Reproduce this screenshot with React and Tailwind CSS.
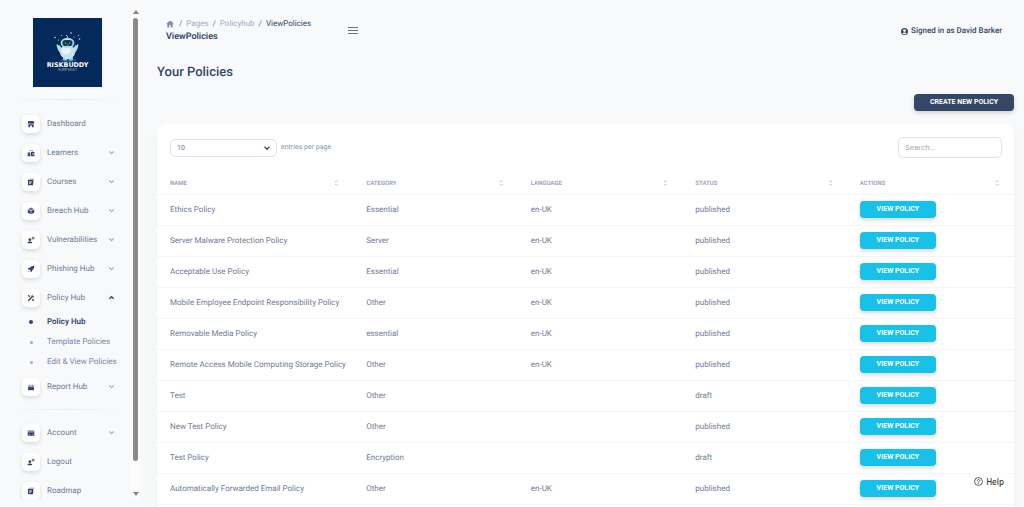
import React from "react";

const icons = {
  shop: (
    <>
      <path d="M2.2 1.5h7.6L11 4.4a1.3 1.3 0 0 1-2.5.3 1.3 1.3 0 0 1-2.5 0 1.3 1.3 0 0 1-2.5 0A1.3 1.3 0 0 1 1 4.4z" />
      <path d="M2 6.2h8v4.6H7.4V8.2H4.6v2.6H2z" />
    </>
  ),
  office: (
    <>
      <path d="M4 5V1.6h5V5H8V2.6H5V5z" opacity=".5" />
      <path fillRule="evenodd" d="M1 5.4h4v5.4H1zM2 7v1h1V7zM6 4.6h5v6.2H6zM7.5 6v1h.8V6zM9 6v1h.8V6zM7.5 8v1h.8V8zM9 8v1h.8V8z" />
    </>
  ),
  book: (
    <>
      <path d="M3.4 1h7.2v7.6H9.8V1.9H3.4z" opacity=".65" />
      <path fillRule="evenodd" d="M1.4 2.6h7.6v8.2H1.4zM3.2 4.4v.9h4v-.9zM3.2 6.2v.9h4v-.9zM3.2 8v.9h2.4V8z" />
    </>
  ),
  box: (
    <>
      <path d="M6 .9 10.4 3 6 5.2 1.6 3z" opacity=".75" />
      <path d="M1.2 3.9 5.6 6v5L1.2 8.800zM10.8 3.9 6.400 6v5l4.400-2.200z" />
    </>
  ),
  support: (
    <>
      <path d="M4.3 3.4a2.1 2.1 0 1 1 0 4.2 2.1 2.1 0 0 1 0-4.2zM.9 11V9.8c0-1 1.5-1.6 3.4-1.6s3.4.6 3.4 1.6V11z" />
      <path d="M7.1 1.3h4.1v3.4H8.8L7.4 6z" opacity=".65" />
    </>
  ),
  rocket: (
    <>
      <path d="M11 1C7.700 1 5.600 2.300 4.300 4.200L2.100 4.500 1 6.500l2.200.1 2.200 2.200.1 2.200 2-1.100.3-2.200C9.700 6.400 11 4.300 11 1z" />
      <path d="M2.600 8.200 1 11l2.800-1.600z" opacity=".7" />
    </>
  ),
  tools: (
    <>
      <path d="m1 9.300 5.700-5.400c-.3-1.800.9-3 2.800-2.700L8 2.700 9.300 4l1.500-1.500c.3 1.900-.9 3.100-2.700 2.800L2.700 11z" />
      <path d="M1.200 2.600 2.600 1.200l2.300 2.300L3.500 4.900zM7.100 8.500l1.400-1.400 2.400 2.400-1.400 1.400z" />
    </>
  ),
  basket: (
    <>
      <path d="M3 4.200 4.100 2h1L4.500 4.200zM9 4.200 7.900 2h-1l.6 2.200zM1 4.200h10v1.600H1z" opacity=".65" />
      <path d="M1.500 6.200h9v4.600h-9z" />
    </>
  ),
  card: (
    <>
      <path d="M1 2h10v2.400H1z" opacity=".6" />
      <path fillRule="evenodd" d="M1 5h10v5H1zM2.400 7.500v.9h2v-.9zM8 7.500v.9h1.400v-.9z" />
    </>
  ),
};

function Chevron({ up, className }) {
  return (
    <svg viewBox="0 0 8 8" className={className} fill="none" stroke="currentColor" strokeWidth={up ? 1.6 : 1.3} aria-hidden="true">
      <path d={up ? "M1.500 5.500 4 3l2.500 2.500" : "M1.500 2.800 4 5.300l2.500-2.500"} />
    </svg>
  );
}

function NavItem({ icon, label, expandable, open }) {
  return (
    <a href="#" aria-expanded={expandable ? !!open : undefined} className="flex h-[29px] items-center text-[8px] text-[#6f7b95]">
      <span className="flex size-[18px] items-center justify-center rounded-[5px] bg-white shadow-[0_2px_4px_rgba(0,0,0,0.12)]">
        <svg viewBox="0 0 12 12" className="size-[8px]" fill="#3a416f" aria-hidden="true">
          {icons[icon]}
        </svg>
      </span>
      <span className="ml-[7px] flex-1">{label}</span>
      {expandable && <Chevron up={open} className={open ? "size-[7px] text-[#344767]" : "size-[7px] text-[#a3abbd]"} />}
    </a>
  );
}

function SubItem({ label, active }) {
  return (
    <a href="#" className={active ? "flex h-5 items-center text-[8px] font-semibold text-[#344767]" : "flex h-5 items-center text-[8px] text-[#7b86a6]"}>
      <span className="flex w-[18px] shrink-0 justify-center">
        <span className={active ? "size-1 rounded-full bg-[#344767]" : "size-[3px] rounded-full bg-[#a3a9c4]"} />
      </span>
      <span className="ml-[7px] whitespace-nowrap">{label}</span>
    </a>
  );
}

function Logo() {
  return (
    <svg viewBox="0 0 69 69" className="size-[69px]" role="img" aria-label="Riskbuddy">
      <rect width="69" height="69" fill="#042a5b" />
      <g fill="#c9dcec">
        <circle cx="22" cy="19.500" r=".8" />
        <circle cx="25.500" cy="22" r=".6" />
        <circle cx="28.500" cy="17.500" r=".5" />
        <circle cx="38" cy="15" r=".8" />
        <circle cx="41" cy="19" r=".5" />
        <circle cx="45.500" cy="17.500" r=".6" />
        <circle cx="46.500" cy="21" r=".8" />
        <circle cx="33.500" cy="17.500" r=".6" />
      </g>
      <path d="M34.500 18v4" stroke="#a9cfe4" strokeWidth=".8" />
      <ellipse cx="35" cy="42.300" rx="8" ry="1.700" fill="#1c5c91" />
      <path d="m23.500 27 1-1 .8 1.500 1-.5 5 6-2 3.500c-3-1.500-5-5-5.800-9.500zM45.500 27l-1-1-.8 1.500-1-.5-5 6 2 3.500c3-1.500 5-5 5.800-9.500z" fill="#b6d9ea" />
      <rect x="30" y="38" width="4" height="4.500" rx="1.500" fill="#9cc8df" />
      <rect x="36" y="38" width="4" height="4.500" rx="1.500" fill="#9cc8df" />
      <ellipse cx="34.500" cy="34" rx="7.600" ry="7.200" fill="#c8e3f0" />
      <ellipse cx="33" cy="32.500" rx="4.500" ry="4" fill="#e7f5fb" />
      <ellipse cx="34.500" cy="25" rx="6.900" ry="5.200" fill="#b9d8e7" />
      <rect x="29.500" y="22" width="10" height="6" rx="2.800" fill="#123c4d" />
      <path d="M32.500 24.500v1.500M36.500 24.500v1.500M33.500 27h2" stroke="#45b9a5" strokeWidth=".9" />
      <text x="34.500" y="49" textAnchor="middle" fontFamily="DejaVu Sans, sans-serif" fontWeight="700" fontSize="6.400" fill="#fff">RISKBUDDY</text>
      <text x="34.500" y="53.300" textAnchor="middle" fontFamily="DejaVu Sans Mono, monospace" fontSize="4" fill="#8ea6c3">SURESKAY</text>
    </svg>
  );
}

const policies = [
  ["Ethics Policy", "Essential", "en-UK", "published"],
  ["Server Malware Protection Policy", "Server", "en-UK", "published"],
  ["Acceptable Use Policy", "Essential", "en-UK", "published"],
  ["Mobile Employee Endpoint Responsibility Policy", "Other", "en-UK", "published"],
  ["Removable Media Policy", "essential", "en-UK", "published"],
  ["Remote Access Mobile Computing Storage Policy", "Other", "en-UK", "published"],
  ["Test", "Other", "", "draft"],
  ["New Test Policy", "Other", "", "published"],
  ["Test Policy", "Encryption", "", "draft"],
  ["Automatically Forwarded Email Policy", "Other", "en-UK", "published"],
];

const columns = [
  ["Name", "w-[22.9%]"],
  ["Category", "w-[19.2%]"],
  ["Language", "w-[19.2%]"],
  ["Status", "w-[19.2%]"],
  ["Actions", "w-[19.5%]"],
];

function Divider() {
  return <div className="h-px bg-linear-to-r from-transparent via-[#e9ebef] to-transparent" />;
}

function Sidebar() {
  return (
    <aside className="my-2 flex w-[140px] shrink-0">
      <div className="flex-1 overflow-hidden">
        <div className="flex justify-center pt-2.5 pb-3 pl-1">
          <Logo />
        </div>
        <div className="mx-2">
          <Divider />
        </div>
        <nav className="mt-[9px] pr-4 pl-[22px]">
          <NavItem icon="shop" label="Dashboard" />
          <NavItem icon="office" label="Learners" expandable />
          <NavItem icon="book" label="Courses" expandable />
          <NavItem icon="box" label="Breach Hub" expandable />
          <NavItem icon="support" label="Vulnerabilities" expandable />
          <NavItem icon="rocket" label="Phishing Hub" expandable />
          <NavItem icon="tools" label="Policy Hub" expandable open />
          <SubItem label="Policy Hub" active />
          <SubItem label="Template Policies" />
          <SubItem label="Edit &amp; View Policies" />
          <NavItem icon="basket" label="Report Hub" expandable />
        </nav>
        <div className="mx-2 my-2">
          <Divider />
        </div>
        <nav className="pr-4 pl-[22px]">
          <NavItem icon="card" label="Account" expandable />
          <NavItem icon="support" label="Logout" />
          <NavItem icon="book" label="Roadmap" />
        </nav>
      </div>
      <div className="flex w-[9px] flex-col items-center bg-[#fcfcfc]" aria-hidden="true">
        <svg viewBox="0 0 6 4" className="my-[2px] h-1 w-1.5 shrink-0" fill="#858585"><path d="M0 4 3 0l3 4z" /></svg>
        <div className="flex w-[5px] flex-1 flex-col pt-[2px]">
          <div className="h-[94%] rounded-full bg-[#8b8b8b]" />
        </div>
        <svg viewBox="0 0 6 4" className="my-[3px] h-1 w-1.5 shrink-0" fill="#858585"><path d="M0 0h6L3 4z" /></svg>
      </div>
    </aside>
  );
}

function SortIcon() {
  return (
    <svg viewBox="0 0 6 8" className="h-[6px] w-[5px]" fill="none" stroke="#a9b1c3" strokeWidth="1" aria-hidden="true">
      <path d="M1 2.800 3 .9l2 1.900M1 5.200l2 1.900 2-1.900" />
    </svg>
  );
}

export default function App() {
  return (
    <div className="flex h-screen overflow-hidden bg-[#f8f9fb] font-['Roboto',sans-serif] text-[#6f7b95] [text-rendering:geometricPrecision]">
      <Sidebar />
      <main className="min-w-0 flex-1 pr-2.5 pl-[17px]">
        <header className="flex items-start pt-[18px] pr-3 pl-[9px]">
          <div className="w-[182px]">
            <nav aria-label="Breadcrumb" className="flex h-3 items-center gap-1 text-[8px] text-[#a5adbb]">
              <a href="#" aria-label="Home" className="mr-px">
                <svg viewBox="0 0 10 10" className="size-2" fill="#8392ab" aria-hidden="true">
                  <path d="M5 .6.300 5h1.300v4.300h2.500V6.400h1.800v2.900h2.500V5h1.300L8 3.400V1.200H6.900v1.200z" />
                </svg>
              </a>
              <span className="text-[#6c757d]">/</span>
              <a href="#">Pages</a>
              <span className="text-[#6c757d]">/</span>
              <a href="#">Policyhub</a>
              <span className="text-[#6c757d]">/</span>
              <span className="text-[#344767]">ViewPolicies</span>
            </nav>
            <h6 className="h-3 text-[9px] leading-[14px] font-semibold text-[#344767]">ViewPolicies</h6>
          </div>
          <button type="button" aria-label="Toggle menu" className="mt-[9px] flex w-[10px] flex-col gap-[2px]">
            <span className="h-px w-full bg-[#67748e]" />
            <span className="h-px w-full bg-[#67748e]" />
            <span className="h-px w-full bg-[#67748e]" />
          </button>
          <a href="#" className="mt-[7px] ml-auto flex h-3 items-center gap-[3px] text-[8px] font-medium text-[#344767]">
            <svg viewBox="0 0 10 10" className="size-[7px]" aria-hidden="true">
              <circle cx="5" cy="5" r="5" fill="#344767" />
              <circle cx="5" cy="3.700" r="1.900" fill="#f8f9fb" />
              <path d="M1.900 7.600C2.500 6.500 3.600 6.300 5 6.300s2.500.2 3.100 1.300A4 4 0 0 1 5 9a4 4 0 0 1-3.100-1.400z" fill="#f8f9fb" />
            </svg>
            Signed in as David Barker
          </a>
        </header>

        <h1 className="mt-[22px] text-[13px] leading-[18px] font-medium text-[#344767]">Your Policies</h1>
        <div className="mt-3 flex justify-end">
          <button type="button" className="h-[17px] w-[100px] rounded-[4px] bg-[#344767] text-[7px] font-bold text-white uppercase shadow-[0_2px_4px_rgba(0,0,0,0.16)]">
            Create new policy
          </button>
        </div>

        <section className="mt-[13px] rounded-t-[9px] bg-white shadow-[0_8px_14px_rgba(0,0,0,0.03)]">
          <div className="flex items-center justify-between pt-[13px] pr-3 pl-[13px]">
            <div className="flex items-center gap-1">
              <div className="relative">
                <select id="entries" defaultValue="10" className="block h-[18px] w-[107px] appearance-none rounded-[5px] border border-[#dfe2e6] bg-white px-1.5 pt-px text-[7px] text-[#67748e]">
                  <option>10</option>
                  <option>25</option>
                  <option>50</option>
                </select>
                <Chevron className="pointer-events-none absolute top-[5px] right-1.5 size-2 text-[#344767]" />
              </div>
              <label htmlFor="entries" className="text-[7px] text-[#8392ab]">entries per page</label>
            </div>
            <input type="search" aria-label="Search" placeholder="Search..." className="h-[21px] w-[104px] rounded-[5px] border border-[#dfe2e6] bg-white px-1.5 text-[8px] placeholder:text-[#a5adbb]" />
          </div>
          <table className="mt-[15px] w-full table-fixed border-collapse text-left text-[8px]">
            <thead>
              <tr className="h-[21px] border-b border-[#f2f4f6]">
                {columns.map(([name, width]) => (
                  <th key={name} className={`${width} pr-[14px] pl-[13px] text-[6px] leading-[7px] font-bold text-[#9ea7b9] uppercase`}>
                    <span className="flex items-center justify-between">
                      {name}
                      <SortIcon />
                    </span>
                  </th>
                ))}
              </tr>
            </thead>
            <tbody>
              {policies.map((row) => (
                <tr key={row[0]} className="h-[31px] border-b border-[#f2f4f6]">
                  {row.map((cell, i) => (
                    <td key={i} className="pl-[13px] whitespace-nowrap">{cell}</td>
                  ))}
                  <td className="pl-[13px]">
                    <button type="button" className="block h-[17px] w-[76px] rounded-[4px] bg-[#17c1e8] text-[7px] font-bold text-white uppercase shadow-[0_2px_4px_rgba(0,0,0,0.16)]">
                      View policy
                    </button>
                  </td>
                </tr>
              ))}
              <tr className="h-[31px]">
                <td colSpan={5} />
              </tr>
            </tbody>
          </table>
        </section>
      </main>

      <button type="button" className="fixed right-[17px] bottom-4 flex h-[19px] w-9 items-center justify-center gap-[3px] bg-white font-['Noto_Sans',sans-serif] text-[8px] font-medium text-[#2f3941]">
        <svg viewBox="0 0 10 10" className="size-[9px] shrink-0" fill="none" stroke="#2f3941" strokeWidth=".9" aria-hidden="true">
          <circle cx="5" cy="5" r="4.400" />
          <path d="M3.700 4.100c0-1.700 2.700-1.700 2.700 0C6.400 5 5 5 5 6.100M5 6.900v.9" />
        </svg>
        Help
      </button>
    </div>
  );
}
